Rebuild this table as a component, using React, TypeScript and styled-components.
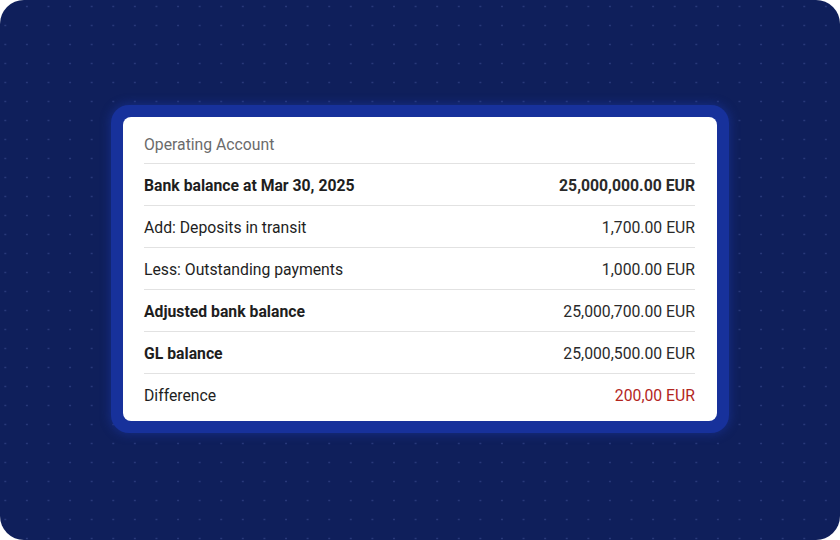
import React from "react";
import styled, { createGlobalStyle } from "styled-components";

type Row = {
  label: string;
  amount: string;
  strongLabel?: boolean;
  strongAmount?: boolean;
  negative?: boolean;
};

const rows: Row[] = [
  { label: "Bank balance at Mar 30, 2025", amount: "25,000,000.00 EUR", strongLabel: true, strongAmount: true },
  { label: "Add: Deposits in transit", amount: "1,700.00 EUR" },
  { label: "Less: Outstanding payments", amount: "1,000.00 EUR" },
  { label: "Adjusted bank balance", amount: "25,000,700.00 EUR", strongLabel: true },
  { label: "GL balance", amount: "25,000,500.00 EUR", strongLabel: true },
  { label: "Difference", amount: "200,00 EUR", negative: true },
];

const GlobalStyle = createGlobalStyle`
  html, body {
    margin: 0;
    padding: 0;
    background: #ffffff;
  }
  body {
    font-family: Roboto, "Liberation Sans", sans-serif;
  }
`;

const App = () => (
  <>
    <GlobalStyle />
    <Backdrop>
      <Frame>
        <Card>
          <Header>Operating Account</Header>
          {rows.map((row) => (
            <Line key={row.label}>
              <Label strong={row.strongLabel}>{row.label}</Label>
              <Amount strong={row.strongAmount} negative={row.negative}>
                {row.amount}
              </Amount>
            </Line>
          ))}
        </Card>
      </Frame>
    </Backdrop>
  </>
);

const Backdrop = styled.div`
  width: 840px;
  height: 540px;
  box-sizing: border-box;
  border-radius: 24px;
  background-color: #0f1f5b;
  background-image: radial-gradient(circle, #29397a 0.8px, transparent 1.2px);
  background-size: 21.6px 19px;
  background-position: -5.5px -3px;
  display: flex;
  align-items: flex-start;
  justify-content: center;
  padding-top: 105px;
  overflow: hidden;
`;

const Frame = styled.div`
  width: 594px;
  padding: 12px;
  border-radius: 18px;
  background: #17319b;
  box-shadow: 0 0 10px 2px rgba(28, 58, 170, 0.45);
`;

const Card = styled.div`
  background: #ffffff;
  border-radius: 8px;
  padding: 8px 22px 5px 21px;
`;

const Header = styled.div`
  height: 39px;
  box-sizing: border-box;
  padding-top: 1px;
  display: flex;
  align-items: center;
  border-bottom: 1px solid #e2e2e2;
  font-size: 15.75px;
  color: #6b6b6b;
`;

const Line = styled.div`
  height: 42px;
  box-sizing: border-box;
  padding-top: 1px;
  display: flex;
  align-items: center;
  justify-content: space-between;
  font-size: 15.75px;
  border-bottom: 1px solid #e2e2e2;
  &:last-child {
    border-bottom: none;
  }
`;

const Label = styled.span<{ strong?: boolean }>`
  color: #1e1e1e;
  font-weight: ${(p) => (p.strong ? 700 : 400)};
`;

const Amount = styled.span<{ strong?: boolean; negative?: boolean }>`
  color: ${(p) => (p.negative ? "#b3261e" : "#2a2a2a")};
  font-weight: ${(p) => (p.strong ? 700 : 400)};
`;

export default App;
